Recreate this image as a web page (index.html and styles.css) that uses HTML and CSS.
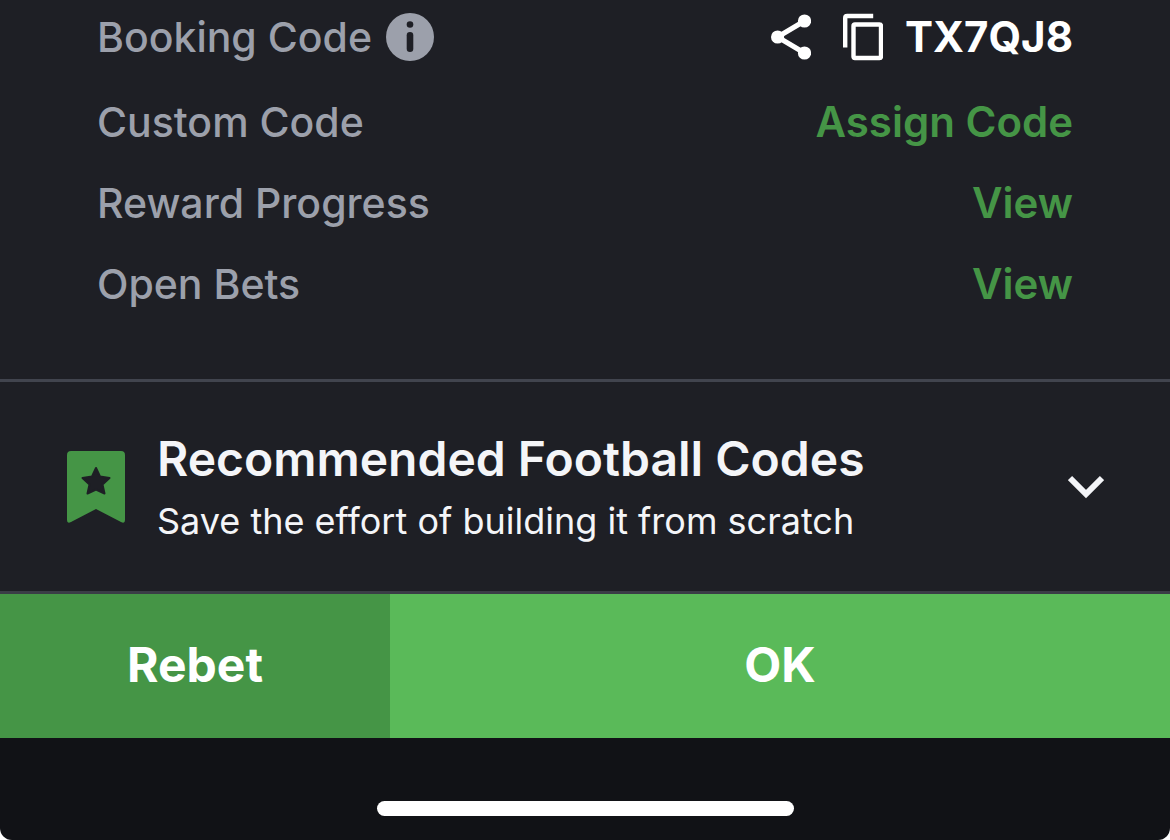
FILE: index.html
```
<!DOCTYPE html>
<html lang="en">
<head>
    <meta charset="UTF-8">
    <meta name="viewport" content="width=device-width, initial-scale=1.0">
    <title>Booking Code</title>
    <link rel="stylesheet" href="styles.css">
</head>
<body>
    <div class="screen">
        <main class="content">
            <section class="details">
                <div class="row row-booking">
                    <span class="label">Booking Code
                        <button type="button" class="icon-btn" aria-label="About booking codes">
                            <svg width="48" height="48" viewBox="0 0 48 48">
                                <circle cx="24" cy="24" r="24" fill="#9ca0ab"/>
                                <circle cx="24" cy="11.5" r="3.3" fill="#1e1f25"/>
                                <path d="M24 22.3v13.5" stroke="#1e1f25" stroke-width="6.6" stroke-linecap="round"/>
                            </svg>
                        </button>
                    </span>
                    <div class="code">
                        <button type="button" class="icon-btn" aria-label="Share">
                            <svg width="40" height="48" viewBox="0 0 40 48">
                                <path d="M33.5 8l-27 16 27 16" fill="none" stroke="#fff" stroke-width="5"/>
                                <circle cx="33.5" cy="8" r="6.6" fill="#fff"/>
                                <circle cx="6.6" cy="24" r="6.6" fill="#fff"/>
                                <circle cx="33.5" cy="40" r="6.6" fill="#fff"/>
                            </svg>
                        </button>
                        <button type="button" class="icon-btn" aria-label="Copy">
                            <svg width="40" height="48" viewBox="0 0 40 48" fill="none" stroke="#fff" stroke-width="4.4">
                                <path d="M2.2 34.5V5q0-2 2-2h26"/>
                                <rect x="10.5" y="11.5" width="27.5" height="33.5" rx="1.5"/>
                            </svg>
                        </button>
                        <span class="code-text">TX7QJ8</span>
                    </div>
                </div>
                <div class="row">
                    <span class="label">Custom Code</span>
                    <a href="#assign" class="link">Assign Code</a>
                </div>
                <div class="row">
                    <span class="label">Reward Progress</span>
                    <a href="#reward" class="link">View</a>
                </div>
                <div class="row">
                    <span class="label">Open Bets</span>
                    <a href="#bets" class="link">View</a>
                </div>
            </section>

            <section class="recommended">
                <svg class="bookmark" width="58" height="72" viewBox="0 0 58 72">
                    <path d="M4 0h50q4 0 4 4v65q0 4-4 2L29 58 4 71q-4 2-4-2V4q0-4 4-4z" fill="#459546"/>
                    <path d="M29 17l4 8.500 9.500 1.500-7 6.500 2 9-8.500-4-8.500 4 2-9-7-6.500 9.500-1.500z" fill="#1e1f25" stroke="#1e1f25" stroke-width="2" stroke-linejoin="round"/>
                </svg>
                <div class="recommended-text">
                    <h2>Recommended Football Codes</h2>
                    <p>Save the effort of building it from scratch</p>
                </div>
                <button type="button" class="icon-btn" aria-label="Show codes">
                    <svg width="36" height="24" viewBox="0 0 36 24">
                        <path d="M2 3l16 16L34 3" fill="none" stroke="#f4f5f8" stroke-width="6"/>
                    </svg>
                </button>
            </section>
        </main>

        <div class="actions">
            <button type="button" class="rebet-btn">Rebet</button>
            <button type="button" class="ok-btn">OK</button>
        </div>

        <div class="bottom-bar">
            <div class="home-indicator"></div>
        </div>
    </div>
</body>
</html>
```
FILE: styles.css
```
* {
    margin: 0;
    padding: 0;
    box-sizing: border-box;
}

body {
    font-family: Inter, "Liberation Sans", sans-serif;
    background: #fff;
}

.screen {
    display: flex;
    flex-direction: column;
    min-height: 100vh;
    background: #111216;
    border-radius: 0 0 12px 12px;
    overflow: hidden;
}

.content {
    background: #1e1f25;
}

button {
    border: none;
    font-family: inherit;
    cursor: pointer;
}

svg {
    display: block;
}

.icon-btn {
    background: none;
}

.details {
    display: flex;
    flex-direction: column;
    gap: 33px;
    padding: 8px 97px 71px;
    border-bottom: 3px solid #41444e;
}

.row {
    display: flex;
    align-items: center;
    justify-content: space-between;
    font-size: 42px;
    line-height: 48px;
}

.row-booking {
    height: 57px;
}

.label {
    display: flex;
    align-items: center;
    gap: 14px;
    font-size: 41px;
    font-weight: 500;
    color: #9ca0ab;
}

.code {
    display: flex;
    align-items: center;
    color: #fff;
}

.code .icon-btn {
    margin-right: 32px;
}

.code .icon-btn + .icon-btn {
    margin-right: 22px;
}

.code-text {
    font-weight: 700;
}

.link {
    font-weight: 600;
    color: #459546;
    text-decoration: none;
}

.recommended {
    display: flex;
    align-items: center;
    padding: 47px 66px 46px 67px;
    border-bottom: 3px solid #3a3d46;
    color: #f4f5f8;
}

.recommended-text {
    flex: 1;
    padding-left: 32px;
}

.recommended h2 {
    font-size: 48px;
    line-height: 60px;
    font-weight: 600;
}

.recommended p {
    font-size: 36px;
    line-height: 48px;
    margin-top: 8px;
}

.actions {
    display: grid;
    grid-template-columns: 1fr 2fr;
}

.actions button {
    height: 144px;
    padding-bottom: 4px;
    font-size: 48px;
    font-weight: 700;
    color: #fff;
}

.actions .rebet-btn {
    background: #459546;
}

.actions .ok-btn {
    background: #5aba59;
}

.bottom-bar {
    flex: 1;
    display: flex;
    justify-content: center;
    align-items: flex-end;
    padding: 63px 20px 24px;
}

.home-indicator {
    width: 417px;
    height: 15px;
    border-radius: 8px;
    background: #fff;
}
```
